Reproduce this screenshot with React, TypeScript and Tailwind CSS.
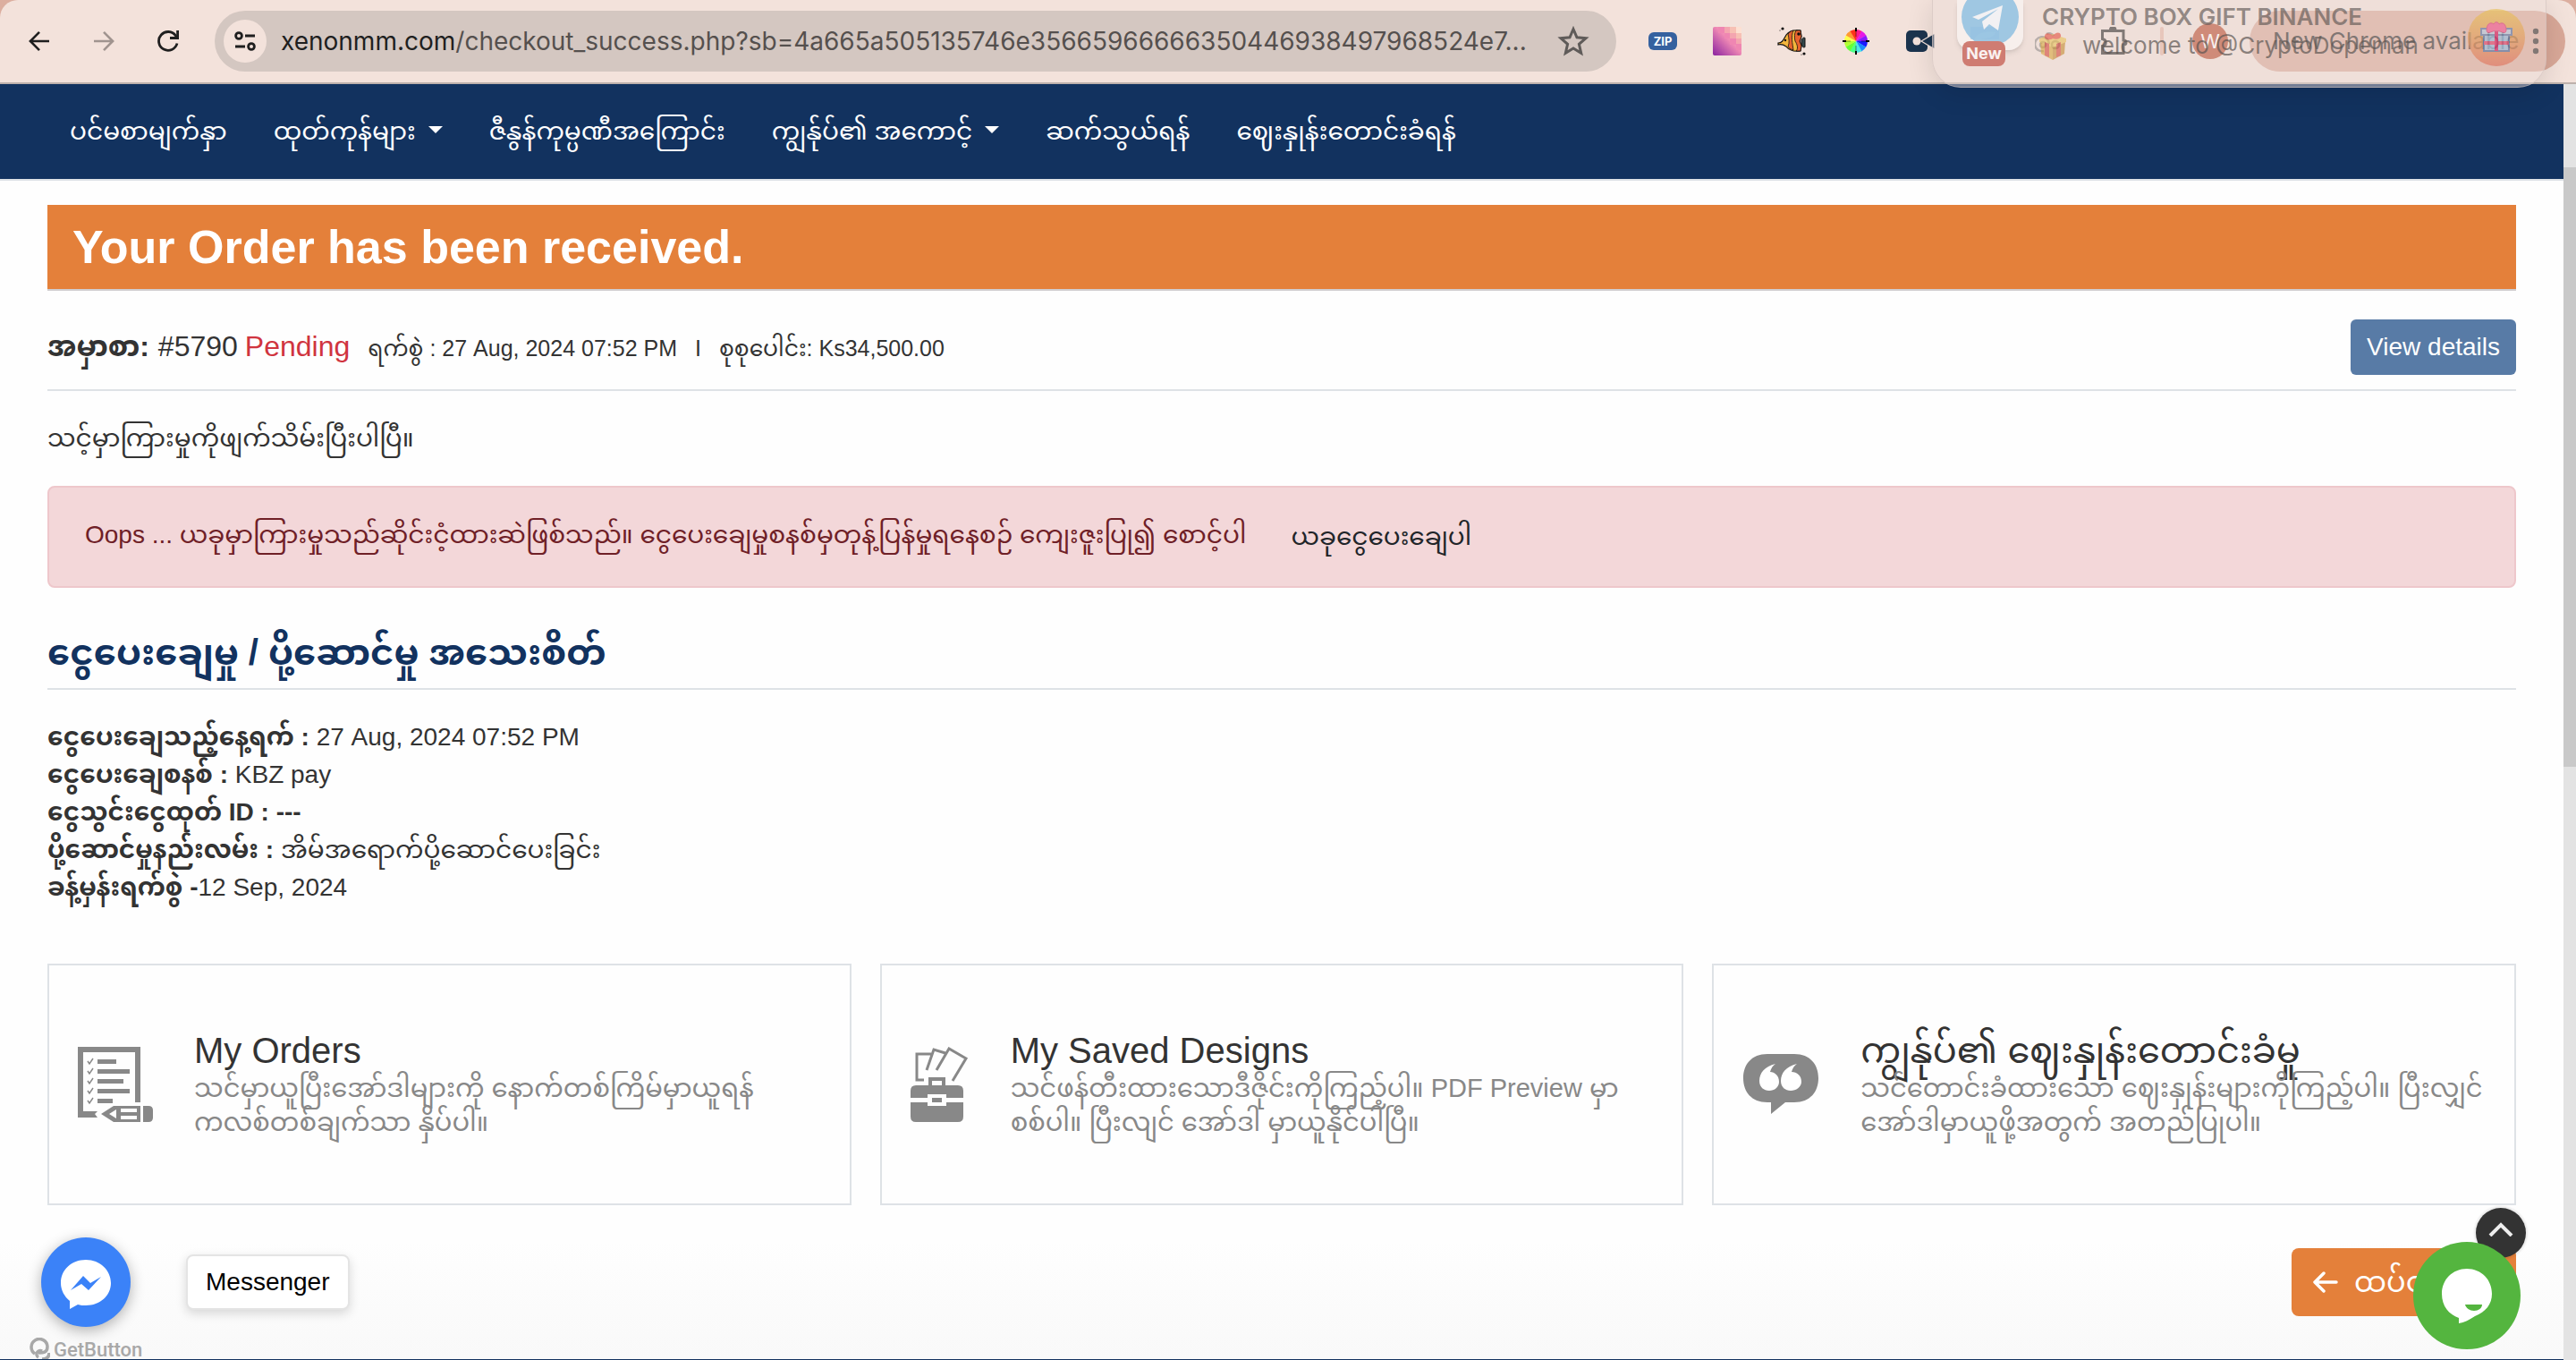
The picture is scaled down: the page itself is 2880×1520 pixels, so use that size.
import type { ReactNode } from 'react';

const FONT = 'font-[Liberation_Sans,Noto_Sans_Myanmar,sans-serif]';
const UI_FONT = 'font-[Inter,sans-serif]';

function ArrowLeft({ className }: { className?: string }) {
  return (
    <svg viewBox="0 0 24 24" className={className} fill="none" stroke="currentColor" strokeWidth="2.6">
      <path d="M23 12H2.5M12 1.8 1.9 12 12 22.2" />
    </svg>
  );
}

function ToolButton({ label, children }: { label: string; children: ReactNode }) {
  return (
    <button aria-label={label} className="flex h-12 w-[72px] shrink-0 items-center justify-center">
      {children}
    </button>
  );
}

function FishIcon() {
  return (
    <svg viewBox="0 0 32 32" className="size-8">
      <circle cx="6" cy="2" r="1.6" fill="#111" />
      <circle cx="3" cy="4" r="0.6" fill="#111" />
      <circle cx="30" cy="30" r="1.6" fill="#111" />
      <circle cx="27" cy="31" r="0.6" fill="#111" />
      <path d="M27 15c1-3 4-4 4-2v9c0 2-3 1-4-2z" fill="#33474a" stroke="#111" strokeWidth="1" />
      <path d="M1 18c5 0 6-4 9-9 3-4 8-6 16-5l1 7-2 5 2 5-1 6c-8 1-13-1-16-5-3-2-5-3-9-2z" fill="#f3b63c" stroke="#111" strokeWidth="1.2" />
      <path d="M12 8c2-2 4-4 6-4-3 7-1 14 0 22-3-1-5-2-6-4 2-4 1-9 0-14z" fill="#e8622e" stroke="#111" strokeWidth="0.8" />
      <path d="M21 4h5l1 7-2 5 2 5-1 6h-5c3-3 1-8-1-11-1-4-1-9 1-12z" fill="#e8622e" stroke="#111" strokeWidth="0.8" />
      <circle cx="24" cy="8" r="1.8" fill="#111" />
      <circle cx="9" cy="15" r="1.2" fill="#111" />
    </svg>
  );
}

function WheelIcon() {
  const colors = ['#ff1a8c', '#e619e6', '#8a1aff', '#1a1aff', '#1a8cff', '#4de6e6', '#4dff88', '#66ff33', '#b3ff33', '#ffff4d', '#ff9933', '#ff331a'];
  return (
    <svg viewBox="0 0 32 32" className="size-8">
      {colors.map((c, i) => (
        <path key={c} d="M16 16V3a13 13 0 0 1 6.8 1.9z" fill={c} transform={`rotate(${i * 30} 16 16)`} />
      ))}
      <path d="M16 1v4M16 27v4M1 16h4M27 16h4" stroke="#000" strokeWidth="2" />
      <path d="M16 5v6M16 21v6M5 16h5M22 16h5" stroke="#000" strokeOpacity="0.45" strokeWidth="1" />
    </svg>
  );
}

function PixelIcon() {
  return (
    <svg viewBox="0 0 32 32" className="size-8">
      <defs>
        <linearGradient id="px" x1="1" y1="0" x2="0" y2="1">
          <stop offset="0" stopColor="#fcd9c4" />
          <stop offset="0.45" stopColor="#f08ab4" />
          <stop offset="1" stopColor="#8a22a0" />
        </linearGradient>
        <clipPath id="pxc"><rect width="32" height="32" rx="2" /></clipPath>
      </defs>
      <g clipPath="url(#pxc)">
        <rect width="32" height="32" fill="url(#px)" />
        <path d="M6 0h7v7H6zM13 7h6v6h-6zM19 13h7v7h-7zM26 19h6v7h-6z" fill="#ef86b2" />
        <path d="M13 0h6v7h-6zM19 7h7v6h-7zM26 13h6v6h-6z" fill="#f4a5b0" />
        <path d="M19 0h7v7h-7zM26 7h6v6h-6z" fill="#f7c0b4" />
        <path d="M26 0h6v7h-6z" fill="#fde0d2" />
      </g>
    </svg>
  );
}

function GiftAvatar() {
  return (
    <svg viewBox="0 0 64 64" className="absolute right-[23px] top-[10px] size-16 opacity-70">
      <defs>
        <linearGradient id="ga" x1="0" y1="0" x2="0" y2="1">
          <stop offset="0" stopColor="#e8c35f" />
          <stop offset="0.5" stopColor="#e3a266" />
          <stop offset="1" stopColor="#e07a66" />
        </linearGradient>
      </defs>
      <circle cx="32" cy="32" r="32" fill="url(#ga)" />
      <path d="M18 28h28v19H18z" fill="#9fc0dc" stroke="#5f7aa5" strokeWidth="2" />
      <path d="M18 36h28v4H18z" fill="#e0567a" />
      <path d="M15 22h34v7H15z" fill="#bccde0" stroke="#6f86ad" strokeWidth="2" />
      <path d="M30 22h4v25h-4z" fill="#d8306e" />
      <path d="M32 25c-4-2-10 5-11-1 0-7 4-10 8-7 1-3 5-3 6 0 4-3 8 0 8 7-1 6-7-1-11 1z" fill="#f2689a" stroke="#d84f80" strokeWidth="1" />
    </svg>
  );
}

function GiftBox() {
  return (
    <svg viewBox="0 0 34 34" className="size-[34px] opacity-60">
      <path d="M3 12l14 6v15L4 26z" fill="#d9a83f" />
      <path d="M31 12l-14 6v15l13-7z" fill="#c48d33" />
      <path d="M2 9l15-5 15 5v4l-15 6L2 13z" fill="#e9c25a" />
      <path d="M8 13l5 2v15l-5-2zM21 15l5-2v15l-5 2z" fill="#d34a3c" />
      <path d="M17 9c-5 3-10 1-9-3 1-4 6-3 9 0 3-4 8-5 9-1 1 4-4 6-9 4z" fill="#e4503f" />
    </svg>
  );
}

function BrowserBar() {
  return (
    <header className={`relative z-10 bg-[#dcae9f] ${UI_FONT}`}>
      <div className="flex h-[94px] items-center rounded-t-[20px] border-b-2 border-[#bdb1ac] bg-[#f3e2db] pl-2 pr-3">
        <ToolButton label="Back"><ArrowLeft className="size-6 text-[#1f1f1f]" /></ToolButton>
        <ToolButton label="Forward"><ArrowLeft className="size-6 rotate-180 text-[#a0948f]" /></ToolButton>
        <ToolButton label="Reload">
          <svg viewBox="0 0 24 24" className="size-6 text-[#1f1f1f]" fill="none" stroke="currentColor" strokeWidth="2.8">
            <path d="M22 14.5A10.4 10.4 0 1 1 20.5 6l2 2.500" />
            <path d="M22.600 0v8.500H14" />
          </svg>
        </ToolButton>
        <div className="ml-4 flex h-[68px] min-w-0 flex-1 items-center rounded-full bg-[#d4c7c1] pl-[10px] pr-[30px]">
          <button aria-label="Site information" className="flex size-12 shrink-0 items-center justify-center rounded-full bg-[#f3e2db]">
            <svg viewBox="0 0 24 24" className="size-6" fill="none" stroke="#1f1f1f" strokeWidth="2.8">
              <circle cx="5" cy="6" r="3.400" />
              <path d="M12 6h11M1 18h11" />
              <circle cx="19" cy="18" r="3.400" />
            </svg>
          </button>
          <p className="ml-4 flex-1 truncate text-[28px] leading-10 text-[#55504e]">
            <span className="text-[#1f1f1f]">xenonmm.com</span>/checkout_success.php?sb=4a665a505135746e35665966666350446938497968524e7...
          </p>
          <button aria-label="Bookmark this tab">
            <svg viewBox="0 0 36 36" className="size-9" fill="none" stroke="#5f5b59" strokeWidth="3">
              <path d="M18 4.500l4 9.300 10 .9-7.600 6.700 2.300 9.900L18 26l-8.700 5.300 2.300-9.900L4 14.700l10-.9z" />
            </svg>
          </button>
        </div>
        <div className="ml-4 flex items-center">
          <ToolButton label="Zip extension">
            <span className="flex h-5 w-8 items-center justify-center rounded-[6px] bg-[#35619f] text-[13px] font-bold leading-5 text-white">ZIP</span>
          </ToolButton>
          <ToolButton label="Pixel extension"><PixelIcon /></ToolButton>
          <ToolButton label="Fish extension"><FishIcon /></ToolButton>
          <ToolButton label="Colour picker"><WheelIcon /></ToolButton>
          <ToolButton label="Screen recorder">
            <svg viewBox="0 0 32 24" className="h-6 w-8">
              <rect width="24" height="24" rx="5" fill="#1b344e" />
              <path d="M32 3v18L17 12z" fill="#1b344e" stroke="#f3e2db" strokeWidth="1.200" />
              <circle cx="12" cy="12" r="4.500" fill="#f3e2db" />
            </svg>
          </ToolButton>
          <ToolButton label="Blue extension">
            <svg viewBox="0 0 32 32" className="size-8">
              <path d="M0 0h32v14H0z" fill="#3f8cc4" />
              <path d="M4 14c4-8 12-9 24-8-2 7-10 6-16 8z" fill="#9cc6e4" />
            </svg>
          </ToolButton>
          <ToolButton label="Grey extension">
            <svg viewBox="0 0 32 32" className="size-8" fill="none" stroke="#8f8a88" strokeWidth="2.500">
              <circle cx="9" cy="20" r="3" />
              <circle cx="23" cy="20" r="4" />
              <path d="M10 27a8 8 0 1 1 6-8M13 8a6 6 0 0 1 8 2" />
            </svg>
          </ToolButton>
          <ToolButton label="Extensions">
            <svg viewBox="0 0 32 32" className="size-8" fill="none" stroke="#2b2827" strokeWidth="3">
              <path d="M3.500 4.500H27v10.500c4 0 4 5 0 5v9.500H3.500v-8c5-1 5-7 0-8z" />
              <path d="M11 3a4.200 4.200 0 0 1 8.400 0z" fill="#2b2827" stroke="none" />
            </svg>
          </ToolButton>
          <span className="ml-4 h-8 w-1 rounded-full bg-[#e3b4a4]" />
          <button aria-label="Profile" className="ml-8 size-10 rounded-full bg-[#b84a2c] text-[22px] leading-10 text-white">W</button>
          <button className="ml-6 flex h-[68px] w-[353px] items-center justify-between rounded-full bg-[#d9a898] pl-[26px] pr-[29px] text-[26px] leading-10 text-[#2a2523]">
            New Chrome available
            <svg viewBox="0 0 8 32" className="h-8 w-2" fill="#2a2523">
              <circle cx="4" cy="5" r="3.200" /><circle cx="4" cy="16" r="3.200" /><circle cx="4" cy="27" r="3.200" />
            </svg>
          </button>
        </div>
      </div>
      <section aria-label="Notification" className="absolute right-[33px] top-0 h-[98px] w-[687px] rounded-b-[32px] border-x border-b border-[#cfc0bb]/60 bg-[#ecdcd6]/45 shadow-[0_6px_30px_rgba(0,0,0,0.12)]">
        <div className="absolute left-[27px] top-0 h-14 w-[74px] rounded-b-2xl bg-white/50 shadow-md">
          <svg viewBox="0 0 74 56" className="h-14 w-[74px]">
            <circle cx="37" cy="19" r="32" fill="#8fbfe0" fillOpacity="0.85" />
            <path d="M17 19 51 6l-5 28-10-7-6 6-2-9 18-14-22 12z" fill="#f2f1f3" />
          </svg>
        </div>
        <span className="absolute left-[33px] top-[46px] h-7 w-12 rounded-lg bg-[#cf7c72] text-center text-[18px] font-bold leading-7 text-white/90">New</span>
        <h2 className="absolute left-[122px] top-0 whitespace-nowrap text-[26px] font-semibold leading-[38px] text-[#5c5552]/65">CRYPTO BOX GIFT BINANCE</h2>
        <div className="absolute left-[117px] top-[34px] flex items-center gap-4 text-[26px] leading-[34px] text-[#5c5552]/70">
          <GiftBox />
          <p className="whitespace-nowrap">welcome to @CryptoDopeman</p>
        </div>
        <GiftAvatar />
      </section>
    </header>
  );
}

const NAV = [
  { text: 'ပင်မစာမျက်နှာ' },
  { text: 'ထုတ်ကုန်များ', menu: true },
  { text: 'ဇီနွန်ကုမ္ပဏီအကြောင်း' },
  { text: 'ကျွန်ုပ်၏ အကောင့်', menu: true },
  { text: 'ဆက်သွယ်ရန်' },
  { text: 'ဈေးနှုန်းတောင်းခံရန်' },
];

function NavBar() {
  return (
    <nav className="flex h-[108px] items-center border-b-2 border-[#dee2e6] bg-[#12325f] pl-[52px] text-[28px] leading-[42px] text-white">
      {NAV.map((n) => (
        <a key={n.text} href="#" className="flex items-center px-[26px]">
          {n.text}
          {n.menu && <svg viewBox="0 0 16 8" className="mb-1 ml-3.5 h-2 w-4" fill="currentColor"><path d="M0 0h16L8 8z" /></svg>}
        </a>
      ))}
    </nav>
  );
}

function OrdersIcon() {
  return (
    <svg viewBox="0 0 84 84" className="h-[84px] w-[84px] shrink-0" fill="#888">
      <path d="M0 0h70v62h-6V6H6v66h16l-3 3 3 4H0z" />
      <path d="M22 14h21v5H22zM22 25h36v5H22zM22 36h29v5H22zM22 47h36v5H22zM22 58h17v5H22z" />
      <path d="M11 16l2 3 4-6M11 27l2 3 4-6M11 38l2 3 4-6M11 49l2 3 4-6M11 60l2 3 4-6" fill="none" stroke="#888" strokeWidth="1.500" />
      <path d="M26 75l14-9h30v18H40zm9 0 8 5v-10zM48 69v4h18v-4zm0 8v4h18v-4z" fillRule="evenodd" />
      <path d="M73 66h6q5 0 5 5v8q0 5-5 5h-6z" />
    </svg>
  );
}

function DesignsIcon() {
  return (
    <svg viewBox="0 0 66 84" className="h-[84px] w-[66px] shrink-0" fill="#888">
      <path d="M15 37H7V8h16M18 26l8-23 13 4M29 26 43 2l19 11-15 25" fill="none" stroke="#888" strokeWidth="3" />
      <path d="M20 43v-9h19v9h-4v-5H24v5z" />
      <path d="M6 43h47q6 0 6 6v8H40v-4H19v4H0v-8q0-6 6-6zM0 62h19v4h21v-4h19v16q0 6-6 6H6q-6 0-6-6zM24 57h11v5H24z" />
    </svg>
  );
}

function QuoteIcon() {
  return (
    <svg viewBox="0 0 86 84" className="h-[84px] w-[86px] shrink-0">
      <path d="M28 8h30c18 0 27 12 27 27S76 62 58 62H48L32 75V62h-4C10 62 1 50 1 35S10 8 28 8z" fill="#888" />
      <path d="M37 19C25 22 19 29 19 38c0 7 5 11 11 11s11-4 11-10c0-7-5-11-10-11 1-4 3-7 6-9zM61 19C49 22 43 29 43 38c0 7 5 11 11 11s12-4 12-10c0-7-5-11-11-11 1-4 3-7 6-9z" fill="#fff" />
    </svg>
  );
}

const CARDS = [
  { icon: <OrdersIcon />, title: 'My Orders', lines: ['သင်မှာယူပြီးအော်ဒါများကို နောက်တစ်ကြိမ်မှာယူရန်', 'ကလစ်တစ်ချက်သာ နှိပ်ပါ။'] },
  { icon: <DesignsIcon />, title: 'My Saved Designs', lines: ['သင်ဖန်တီးထားသောဒီဇိုင်းကိုကြည့်ပါ။ PDF Preview မှာ', 'စစ်ပါ။ ပြီးလျင် အော်ဒါ မှာယူနိုင်ပါပြီ။'] },
  { icon: <QuoteIcon />, title: 'ကျွန်ုပ်၏ ဈေးနှုန်းတောင်းခံမှု', lines: ['သင်တောင်းခံထားသော ဈေးနှုန်းများကိုကြည့်ပါ။ ပြီးလျှင်', 'အော်ဒါမှာယူဖို့အတွက် အတည်ပြုပါ။'] },
];

const DETAILS = [
  { label: 'ငွေပေးချေသည့်နေ့ရက် :', value: ' 27 Aug, 2024 07:52 PM' },
  { label: 'ငွေပေးချေစနစ် :', value: ' KBZ pay' },
  { label: 'ငွေသွင်းငွေထုတ် ID : ---', value: '' },
  { label: 'ပို့ဆောင်မှုနည်းလမ်း :', value: ' အိမ်အရောက်ပို့ဆောင်ပေးခြင်း' },
  { label: 'ခန့်မှန်းရက်စွဲ -', value: '12 Sep, 2024' },
];

function OrderPage() {
  return (
    <main className="flex-1 bg-linear-to-b from-[#fefefe] from-90% to-[#f9f9f9] px-[53px] pt-[27px] text-[28px] leading-[42px] text-[#333]">
      <h1 className="border-b-2 border-[#d0cdd0] bg-[#e4803a] pl-7 text-[52px] font-bold leading-[94px] text-white">Your Order has been received.</h1>

      <div className="flex items-center justify-between border-b-2 border-[#dee2e6] pb-4 pt-8">
        <p className="flex items-baseline text-[32px]">
          <strong>အမှာစာ:</strong>
          <span className="ml-2.5">#5790</span>
          <span className="ml-2 text-[#d0343f]">Pending</span>
          <span className="ml-5 whitespace-pre text-[25px]">ရက်စွဲ : 27 Aug, 2024 07:52 PM</span>
          <span className="ml-5 text-[25px]">I</span>
          <span className="ml-5 text-[25px]">စုစုပေါင်း: Ks34,500.00</span>
        </p>
        <button className="h-[62px] rounded-md bg-[#587ba6] px-[18px] text-white">View details</button>
      </div>

      <p className="my-8">သင့်မှာကြားမှုကိုဖျက်သိမ်းပြီးပါပြီ။</p>

      <div role="alert" className="flex h-[114px] items-center rounded-lg border-2 border-[#eec7cb] bg-[#f3d7d9] pb-1 pl-10 text-[#6f2027]">
        <p>Oops ... ယခုမှာကြားမှုသည်ဆိုင်းငံ့ထားဆဲဖြစ်သည်။ ငွေပေးချေမှုစနစ်မှတုန့်ပြန်မှုရနေစဉ် ကျေးဇူးပြု၍ စောင့်ပါ</p>
        <a href="#" className="ml-[50px] pt-1 text-[#212529]">ယခုငွေပေးချေပါ</a>
      </div>

      <h2 className="mt-10 border-b-2 border-[#dee2e6] pb-2 text-[40px] font-bold leading-[64px] text-[#12325f]">ငွေပေးချေမှု / ပို့ဆောင်မှု အသေးစိတ်</h2>

      <div className="mt-8">
        {DETAILS.map((d) => (
          <p key={d.label}><strong>{d.label}</strong>{d.value}</p>
        ))}
      </div>

      <div className="mt-16 grid grid-cols-3 gap-8">
        {CARDS.map((c) => (
          <a key={c.title} href="#" className="flex h-[270px] items-center gap-[46px] whitespace-nowrap border-2 border-[#dee2e6] pl-8">
            {c.icon}
            <span>
              <span className="block text-[40px] leading-[46px]">{c.title}</span>
              {c.lines.map((l) => <span key={l} className="block text-[29px] leading-[38px] text-[#888]">{l}</span>)}
            </span>
          </a>
        ))}
      </div>

      <div className="mt-12 flex justify-end">
        <a href="#" className="flex h-[76px] w-[251px] items-center gap-[18px] rounded-lg bg-[#e4803a] pl-6 text-[32px] text-white">
          <svg viewBox="0 0 28 24" className="h-6 w-7 shrink-0" fill="none" stroke="currentColor" strokeWidth="3.500" strokeLinecap="round" strokeLinejoin="round">
            <path d="M26 12H2.500M12 2 2 12l10 10" />
          </svg>
          <span className="whitespace-nowrap">ထပ်ဝယ်ရန်</span>
        </a>
      </div>
    </main>
  );
}

function FloatingWidgets() {
  return (
    <>
      <div className="absolute bottom-0 left-8 flex flex-col">
        <div className="flex items-center">
          <button aria-label="Open Messenger" className="ml-3.5 size-[100px] rounded-full bg-[#3b82f8] shadow-[0_4px_16px_rgba(0,0,0,0.3)]">
            <svg viewBox="0 0 100 100" className="size-[100px]">
              <path d="M50 25c-16 0-28 11-28 26 0 8 4 15 10 20v9l9-5c3 1 6 1 9 1 16 0 28-11 28-25S66 25 50 25z" fill="#fff" />
              <path d="M33 59l14-16 8 8 12-7-14 15-8-7z" fill="#3b82f8" />
            </svg>
          </button>
          <span className="ml-[62px] rounded-lg border-2 border-[#e4e4e4] bg-white px-5 py-2 text-[28px] leading-[42px] text-black shadow-[0_4px_12px_rgba(0,0,0,0.15)]">Messenger</span>
        </div>
        <a href="#" className="mt-3 flex h-6 items-end gap-1 text-[#a8a8a8]">
          <svg viewBox="0 0 24 24" className="size-6" fill="none" stroke="currentColor" strokeWidth="3.500">
            <path d="M7 18a9 9 0 1 1 14-8c0 7-5 7-10 7M11 22a4 4 0 0 1 4-7" />
            <path d="M15 24q8 0 8-7" />
          </svg>
          <span className="font-[Roboto,sans-serif] text-[22px] font-medium leading-5">GetButton</span>
        </a>
      </div>
      <button aria-label="Scroll to top" className="absolute bottom-[113px] right-[42px] flex size-14 items-center justify-center rounded-full bg-[#333] pb-2 shadow-[0_0_2px_2px_rgba(0,0,0,0.08)]">
        <svg viewBox="0 0 28 16" className="h-4 w-7" fill="none" stroke="#eee" strokeWidth="4"><path d="M2 15 14 3l12 12" /></svg>
      </button>
      <button aria-label="Open chat" className="absolute bottom-[11px] right-12 size-[120px] rounded-full bg-[#54b53f]">
        <svg viewBox="0 0 120 120" className="size-[120px]">
          <path d="M60 30c-16 0-28 12-28 28 0 14 8 23 19 27v6c6-1 12-4 18-8 12-5 19-13 19-25 0-16-12-28-28-28z" fill="#fff" />
          <path d="M58 70h19c0 4-4 7-9 7s-9-3-10-7z" fill="#54b53f" />
        </svg>
      </button>
    </>
  );
}

export default function App() {
  return (
    <div className="flex h-screen flex-col overflow-hidden bg-[#fefefe]">
      <BrowserBar />
      <div className="flex min-h-0 flex-1">
        <div className={`relative flex min-w-0 flex-1 flex-col border-b border-[#12325f] ${FONT}`}>
          <NavBar />
          <OrderPage />
          <FloatingWidgets />
        </div>
        <div className="w-[14px] shrink-0 bg-[#e3e3e3] pt-[93px]">
          <div className="h-[670px] bg-[#c9c9c9]" />
        </div>
      </div>
    </div>
  );
}
